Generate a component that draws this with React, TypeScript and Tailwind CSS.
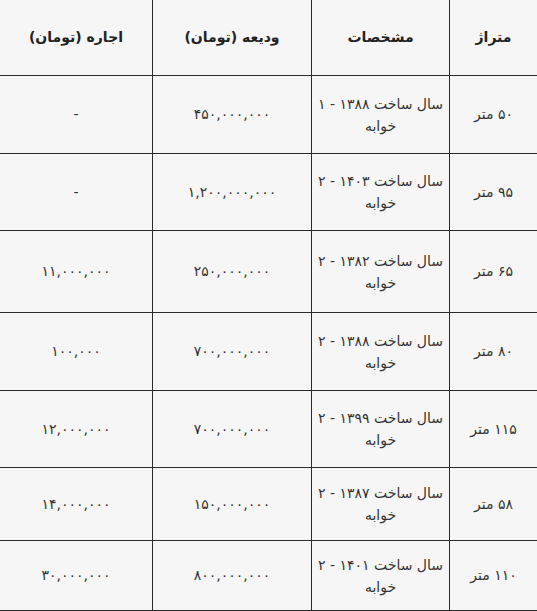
import React from "react";

const rows = [
  { area: "۵۰ متر", year: "۱۳۸۸", beds: "۱", deposit: "۴۵۰,۰۰۰,۰۰۰", rent: "-", h: "h-[78px]" },
  { area: "۹۵ متر", year: "۱۴۰۳", beds: "۲", deposit: "۱,۲۰۰,۰۰۰,۰۰۰", rent: "-", h: "h-[77px]" },
  { area: "۶۵ متر", year: "۱۳۸۲", beds: "۲", deposit: "۲۵۰,۰۰۰,۰۰۰", rent: "۱۱,۰۰۰,۰۰۰", h: "h-[82px]" },
  { area: "۸۰ متر", year: "۱۳۸۸", beds: "۲", deposit: "۷۰۰,۰۰۰,۰۰۰", rent: "۱۰۰,۰۰۰", h: "h-[78px]" },
  { area: "۱۱۵ متر", year: "۱۳۹۹", beds: "۲", deposit: "۷۰۰,۰۰۰,۰۰۰", rent: "۱۲,۰۰۰,۰۰۰", h: "h-[77px]" },
  { area: "۵۸ متر", year: "۱۳۸۷", beds: "۲", deposit: "۱۵۰,۰۰۰,۰۰۰", rent: "۱۴,۰۰۰,۰۰۰", h: "h-[73px]" },
  { area: "۱۱۰ متر", year: "۱۴۰۱", beds: "۲", deposit: "۸۰۰,۰۰۰,۰۰۰", rent: "۳۰,۰۰۰,۰۰۰", h: "h-[70px]" },
];

const cell = "flex flex-col items-center justify-center text-center";

export default function App() {
  return (
    <div
      dir="rtl"
      className="w-[537px] h-[611px] overflow-hidden bg-[#f6f6f6] text-[#333] text-[14px]"
      style={{ fontFamily: '"DejaVu Sans", sans-serif' }}
    >
      {/* header */}
      <div className="grid grid-cols-[88px_138px_159px_152px] h-[76px] border-b border-[#2a2a2a] font-bold text-[#222]">
        <div className={`${cell} border-l border-[#2a2a2a]`}>متراژ</div>
        <div className={`${cell} border-l border-[#2a2a2a]`}>مشخصات</div>
        <div className={`${cell} border-l border-[#2a2a2a]`}>ودیعه (تومان)</div>
        <div className={cell}>اجاره (تومان)</div>
      </div>

      {rows.map((r, i) => (
        <div
          key={i}
          className={`grid grid-cols-[88px_138px_159px_152px] ${r.h} border-b border-[#2a2a2a]`}
        >
          <div className={`${cell} border-l border-[#2a2a2a]`}>{r.area}</div>
          <div className={`${cell} border-l border-[#2a2a2a] leading-[22px] whitespace-nowrap`}>
            <span>
              سال ساخت {r.year} - {r.beds}
            </span>
            <span>خوابه</span>
          </div>
          <div className={`${cell} border-l border-[#2a2a2a]`}>{r.deposit}</div>
          <div className={cell}>{r.rent}</div>
        </div>
      ))}
    </div>
  );
}
